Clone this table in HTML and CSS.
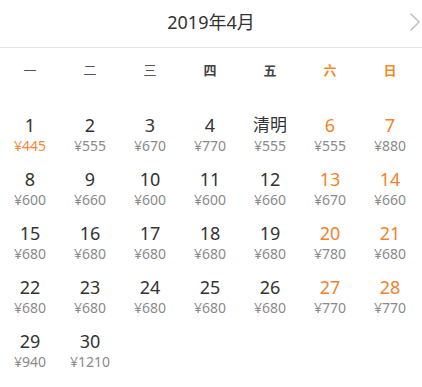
FILE: index.html
```html
<!DOCTYPE html>
<html lang="zh">
<head>
<meta charset="utf-8">
<link rel="stylesheet" href="styles.css">
</head>
<body>
<div class="cal">
  <div class="head">
    <span class="title">2019年4月</span>
    <svg class="next" width="12" height="20" viewBox="0 0 12 20"><path d="M1.5 1.5 L10 10 L1.5 18.5" fill="none" stroke="#c4c4c4" stroke-width="1.6"/></svg>
  </div>
  <div class="week">
    <span class="light">一</span><span class="light">二</span><span class="light">三</span><span>四</span><span>五</span><span class="we">六</span><span class="we">日</span>
  </div>
  <div class="grid">
    <div class="cell"><span class="d">1</span><span class="p hot">¥445</span></div>
    <div class="cell"><span class="d">2</span><span class="p">¥555</span></div>
    <div class="cell"><span class="d">3</span><span class="p">¥670</span></div>
    <div class="cell"><span class="d">4</span><span class="p">¥770</span></div>
    <div class="cell"><span class="d hol">清明</span><span class="p">¥555</span></div>
    <div class="cell wk"><span class="d">6</span><span class="p">¥555</span></div>
    <div class="cell wk"><span class="d">7</span><span class="p">¥880</span></div>

    <div class="cell"><span class="d">8</span><span class="p">¥600</span></div>
    <div class="cell"><span class="d">9</span><span class="p">¥660</span></div>
    <div class="cell"><span class="d">10</span><span class="p">¥600</span></div>
    <div class="cell"><span class="d">11</span><span class="p">¥600</span></div>
    <div class="cell"><span class="d">12</span><span class="p">¥660</span></div>
    <div class="cell wk"><span class="d">13</span><span class="p">¥670</span></div>
    <div class="cell wk"><span class="d">14</span><span class="p">¥660</span></div>

    <div class="cell"><span class="d">15</span><span class="p">¥680</span></div>
    <div class="cell"><span class="d">16</span><span class="p">¥680</span></div>
    <div class="cell"><span class="d">17</span><span class="p">¥680</span></div>
    <div class="cell"><span class="d">18</span><span class="p">¥680</span></div>
    <div class="cell"><span class="d">19</span><span class="p">¥680</span></div>
    <div class="cell wk"><span class="d">20</span><span class="p">¥780</span></div>
    <div class="cell wk"><span class="d">21</span><span class="p">¥680</span></div>

    <div class="cell"><span class="d">22</span><span class="p">¥680</span></div>
    <div class="cell"><span class="d">23</span><span class="p">¥680</span></div>
    <div class="cell"><span class="d">24</span><span class="p">¥680</span></div>
    <div class="cell"><span class="d">25</span><span class="p">¥680</span></div>
    <div class="cell"><span class="d">26</span><span class="p">¥680</span></div>
    <div class="cell wk"><span class="d">27</span><span class="p">¥770</span></div>
    <div class="cell wk"><span class="d">28</span><span class="p">¥770</span></div>

    <div class="cell"><span class="d">29</span><span class="p">¥940</span></div>
    <div class="cell"><span class="d">30</span><span class="p">¥1210</span></div>
  </div>
</div>
</body>
</html>
```
FILE: styles.css
```css
html, body {
  margin: 0;
  padding: 0;
  background: #fff;
}
body {
  font-family: "Noto Sans", "Noto Sans CJK SC", sans-serif;
  color: #333;
}
.cal {
  width: 422px;
}
.head {
  position: relative;
  height: 47px;
  border-bottom: 1px solid #e3e3e3;
  display: flex;
  align-items: center;
  justify-content: center;
}
.title {
  font-size: 18px;
  color: #333;
  line-height: 22px;
  margin-top: -4px;
}
.next {
  position: absolute;
  right: 1px;
  top: 12px;
}
.week {
  display: grid;
  grid-template-columns: repeat(7, 60px);
  height: 44px;
  align-items: center;
}
.week span {
  text-align: center;
  font-size: 13px;
  font-weight: 700;
  color: #444;
  line-height: 16px;
}
.week span.light {
  font-weight: 400;
  color: #555;
}
.week span.we {
  color: #f08a24;
}
.grid {
  margin-top: 15px;
  display: grid;
  grid-template-columns: repeat(7, 60px);
  grid-auto-rows: 54px;
}
.cell {
  display: flex;
  flex-direction: column;
  align-items: center;
  justify-content: center;
  gap: 1px;
}
.d {
  font-size: 18px;
  line-height: 21px;
  color: #333;
}
.d.hol {
  font-size: 17px;
  line-height: 20px;
  margin-bottom: 1px;
}
.p {
  font-size: 14px;
  line-height: 17px;
  color: #8a8a8a;
}
.p.hot {
  color: #f5873a;
}
.wk .d {
  color: #f5822a;
}
```
